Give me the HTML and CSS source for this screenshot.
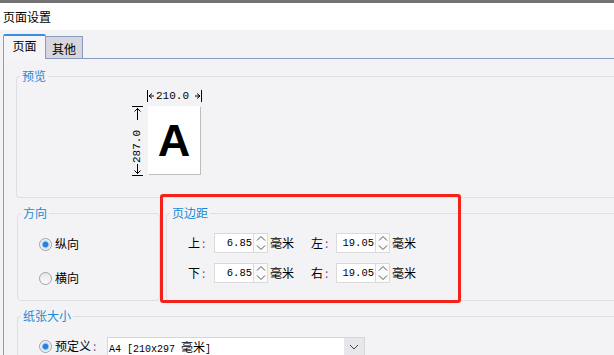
FILE: index.html
```html
<!DOCTYPE html>
<html lang="zh-CN">
<head>
<meta charset="utf-8">
<title>页面设置</title>
<link rel="stylesheet" href="styles.css">
</head>
<body>
<div class="window">
  <div class="titlebar">页面设置</div>
  <div class="tabs">
    <div class="tab active">页面</div>
    <div class="tab other">其他</div>
    <div class="tab-fill"></div>
  </div>
  <div class="pane">
    <fieldset class="group preview">
      <legend>预览</legend>
      <div class="diagram">
        <div class="hdim">
          <svg class="harrow" width="8" height="14" viewBox="0 0 8 14"><path d="M0.5 1V13M5 4.5L2 7L5 9.5M2 7H7" fill="none" stroke="#000" stroke-width="1"/></svg>
          <span class="dimtext">210.0</span>
          <svg class="harrow" width="8" height="14" viewBox="0 0 8 14"><path d="M7.5 1V13M3 4.5L6 7L3 9.5M1 7H6" fill="none" stroke="#000" stroke-width="1"/></svg>
        </div>
        <div class="vdim">
          <svg width="11" height="22" viewBox="0 0 11 22"><path d="M0 0.5H11M5.5 2V14M2.5 5.5L5.5 2.5L8.5 5.5" fill="none" stroke="#000" stroke-width="1"/></svg>
          <span class="vtext">287.0</span>
          <svg width="11" height="12" viewBox="0 0 11 12"><path d="M5.5 0V9.5M2.5 6.5L5.5 9.5L8.5 6.5M0 11.5H11" fill="none" stroke="#000" stroke-width="1"/></svg>
        </div>
        <div class="page">A</div>
      </div>
    </fieldset>

    <div class="row">
      <fieldset class="group orient">
        <legend>方向</legend>
        <div class="radios">
          <div class="radio-item"><span class="radio checked"></span><span>纵向</span></div>
          <div class="radio-item"><span class="radio"></span><span>横向</span></div>
        </div>
      </fieldset>
      <fieldset class="group margins">
        <legend>页边距</legend>
        <div class="mrows">
          <div class="mrow">
            <span class="lbl">上<span class="colon">:</span></span>
            <span class="num">6.85</span>
            <span class="spin"><svg width="14" height="18" viewBox="0 0 14 18"><path d="M3 6.5L7 2.5L11 6.5M3 11.5L7 15.5L11 11.5" fill="none" stroke="#555" stroke-width="1"/></svg></span>
            <span class="unit">毫米</span>
            <span class="lbl lbl2">左<span class="colon">:</span></span>
            <span class="num">19.05</span>
            <span class="spin"><svg width="14" height="18" viewBox="0 0 14 18"><path d="M3 6.5L7 2.5L11 6.5M3 11.5L7 15.5L11 11.5" fill="none" stroke="#555" stroke-width="1"/></svg></span>
            <span class="unit">毫米</span>
          </div>
          <div class="mrow">
            <span class="lbl">下<span class="colon">:</span></span>
            <span class="num">6.85</span>
            <span class="spin"><svg width="14" height="18" viewBox="0 0 14 18"><path d="M3 6.5L7 2.5L11 6.5M3 11.5L7 15.5L11 11.5" fill="none" stroke="#555" stroke-width="1"/></svg></span>
            <span class="unit">毫米</span>
            <span class="lbl lbl2">右<span class="colon">:</span></span>
            <span class="num">19.05</span>
            <span class="spin"><svg width="14" height="18" viewBox="0 0 14 18"><path d="M3 6.5L7 2.5L11 6.5M3 11.5L7 15.5L11 11.5" fill="none" stroke="#555" stroke-width="1"/></svg></span>
            <span class="unit">毫米</span>
          </div>
        </div>
      </fieldset>
    </div>

    <fieldset class="group paper">
      <legend>纸张大小</legend>
      <div class="paper-row">
        <span class="radio checked"></span>
        <span class="plabel">预定义<span class="colon">:</span></span>
        <div class="select">
          <span class="select-text">A4 [210x297 <span class="cjk">毫米</span>]</span>
          <span class="select-btn"><svg width="20" height="18" viewBox="0 0 20 18"><path d="M6 7L10 11L14 7" fill="none" stroke="#444" stroke-width="1"/></svg></span>
        </div>
      </div>
    </fieldset>
  </div>
  <div class="highlight"></div>
</div>
</body>
</html>
```
FILE: styles.css
```css
* { box-sizing: border-box; }
html, body { margin: 0; padding: 0; }
body {
  width: 614px;
  height: 355px;
  overflow: hidden;
  background: #f3f3f6;
  font-family: "Noto Sans CJK SC", "Microsoft YaHei", sans-serif;
  font-size: 12px;
  line-height: 14px;
  color: #000;
}
.window { position: relative; width: 614px; height: 355px; overflow: hidden; }

.titlebar {
  height: 30px;
  border-top: 3px solid #727272;
  background: #fff;
  display: flex;
  align-items: center;
  padding-left: 3px;
}

.tabs { display: flex; align-items: flex-end; height: 29px; }
.tab { display: flex; justify-content: center; align-items: flex-start; }
.tab.active {
  margin-left: 3px;
  width: 43px;
  height: 25px;
  padding-top: 3px;
  border: 1px solid #8a9bc2;
  border-top: 2px solid #3a8ee6;
  border-bottom: none;
  border-radius: 2px 2px 0 0;
  background: #f5f5f8;
}
.tab.other {
  width: 37px;
  height: 23px;
  padding-top: 5px;
  border: 1px solid #8a9bc2;
  border-left: none;
  background: #d6d6dc;
}
.tab-fill { flex: 1; align-self: stretch; border-bottom: 1px solid #8a9bc2; }

.pane {
  margin-left: 3px;
  border-left: 1px solid #8a9bc2;
  height: 296px;
  padding: 10px 0 0 12px;
}

.group {
  border: 1px solid #dedee4;
  border-right: none;
  border-radius: 4px 0 0 4px;
  margin: 0;
  padding: 0;
  min-width: 0;
}
.group legend {
  margin-left: 3px;
  padding: 0 2px;
  color: #1a8ad4;
  font-size: 12px;
  line-height: 14px;
}

.preview { padding-bottom: 21px; }
.diagram {
  display: grid;
  grid-template-columns: 11px 55px;
  grid-template-rows: 14px 70px;
  column-gap: 4px;
  row-gap: 3px;
  margin: 6px 0 0 115px;
}
.hdim {
  grid-column: 2;
  grid-row: 1;
  display: flex;
  align-items: center;
}
.harrow { display: block; flex: none; }
.dimtext {
  font-family: "Liberation Mono", monospace;
  font-size: 11px;
  line-height: 14px;
  flex: 1;
  padding-left: 1px;
}
.vdim {
  grid-column: 1;
  grid-row: 2;
  display: flex;
  flex-direction: column;
  align-items: center;
}
.vdim svg { display: block; flex: none; }
.vtext {
  flex: 1;
  writing-mode: vertical-rl;
  transform: rotate(180deg);
  font-family: "Liberation Mono", monospace;
  font-size: 11px;
  line-height: 11px;
  text-align: center;
}
.page {
  grid-column: 2;
  grid-row: 2;
  margin-left: 1px;
  width: 52px;
  height: 68px;
  background: #fff;
  box-shadow: 1px 1px 0 #bdbdbd;
  display: flex;
  align-items: center;
  justify-content: center;
  font-family: "Liberation Sans", Arial, sans-serif;
  font-weight: bold;
  font-size: 45px;
  line-height: 1;
}

.row { display: flex; margin-top: 8px; margin-left: 1px; }
.orient { flex: none; width: 143px; height: 95px; border-right: 1px solid #dedee4; border-radius: 4px; }
.margins { flex: 1; margin-left: 6px; height: 95px; }

.radios { display: flex; flex-direction: column; gap: 14px; padding: 14px 0 0 21px; }
.radio-item { display: flex; align-items: center; gap: 3px; height: 20px; }
.radio {
  flex: none;
  width: 13px;
  height: 13px;
  border-radius: 50%;
  border: 1px solid #a2a2a6;
  background: linear-gradient(#e6e6e8, #fbfbfb);
}
.radio.checked {
  background: radial-gradient(circle, #2b7ee0 0, #2b7ee0 2.4px, #a9ccf3 3.2px, #dce9f8 4.2px, #f4f4f6 5px);
}

.mrows { display: flex; flex-direction: column; gap: 10px; padding: 13px 0 0 21px; }
.mrow { display: flex; align-items: center; height: 20px; }
.lbl { width: 26px; flex: none; }
.lbl2 { margin-left: 17px; width: 25px; }
.colon { color: #7d4f8c; margin-left: 2px; }
.num {
  flex: none;
  width: 40px;
  height: 20px;
  border: 1px solid #dadada;
  background: #fff;
  text-align: right;
  padding-right: 1px;
  font-family: "Liberation Mono", monospace;
  font-size: 10.5px;
  line-height: 18px;
}
.spin {
  flex: none;
  width: 14px;
  height: 20px;
  border: 1px solid #dadada;
  border-left: none;
  background: #fbfbfb;
}
.spin svg { display: block; }
.unit { margin-left: 2px; }

.paper { margin: 8px 0 0 1px; height: 46px; border-bottom: none; border-radius: 4px 0 0 0; }
.paper-row { display: flex; align-items: flex-start; height: 18px; margin: 14px 0 0 21px; }
.paper-row .radio { margin-top: 3px; }
.plabel { margin-left: 3px; width: 52px; padding-top: 2px; }
.select {
  width: 258px;
  height: 18px;
  border: 1px solid #d6d6d6;
  border-bottom: none;
  background: #fff;
  display: flex;
  align-items: flex-start;
}
.select-text {
  flex: 1;
  padding-left: 1px;
  font-family: "Liberation Mono", monospace;
  font-size: 10px;
  line-height: 18px;
}
.cjk { font-family: "Noto Sans CJK SC", sans-serif; font-size: 12px; }
.select-btn {
  width: 20px;
  height: 17px;
  background: #e7e7eb;
}
.select-btn svg { display: block; }

.highlight {
  position: absolute;
  left: 160px;
  top: 194px;
  width: 301px;
  height: 109px;
  border: 3px solid #f5221b;
  border-radius: 3px;
}
```
